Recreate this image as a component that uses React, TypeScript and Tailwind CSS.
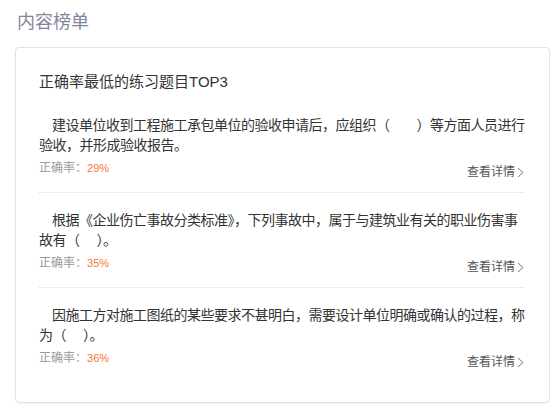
import React from 'react';

interface Question {
  lines: string[];
  rate: string;
}

const questions: Question[] = [
  {
    lines: ['建设单位收到工程施工承包单位的验收申请后，应组织（　　）等方面人员进行', '验收，并形成验收报告。'],
    rate: '29%',
  },
  {
    lines: ['根据《企业伤亡事故分类标准》，下列事故中，属于与建筑业有关的职业伤害事', '故有（　 ）。'],
    rate: '35%',
  },
  {
    lines: ['因施工方对施工图纸的某些要求不甚明白，需要设计单位明确或确认的过程，称', '为（　 ）。'],
    rate: '36%',
  },
];

const Chevron: React.FC = () => (
  <svg width="7" height="11" viewBox="0 0 7 11" className="ml-[2px] inline-block">
    <path d="M1 1 L6 5.5 L1 10" fill="none" stroke="#777" strokeWidth="1" />
  </svg>
);

const QuestionItem: React.FC<{ q: Question; last: boolean }> = ({ q, last }) => {
  return (
    <div className={`pt-[17px] ${last ? '' : 'pb-[12px] border-b border-dotted border-[#dcdcdc]'}`}>
      <div className="text-[14px] leading-[20px] text-[#333] whitespace-nowrap tracking-[-0.5px]">
        {q.lines.map((line, i) => (
          <div key={i} className={i === 0 ? 'pl-[13px]' : ''}>
            {line}
          </div>
        ))}
      </div>
      <div className="mt-[5px] flex justify-between items-start">
        <span className="text-[12px] leading-4 text-[#999]">
          正确率：<span className="text-[#f5763b] text-[11px]">{q.rate}</span>
        </span>
        <a className="mt-[4px] mr-[1px] flex items-center text-[12px] leading-4 text-[#555] cursor-pointer">
          查看详情
          <Chevron />
        </a>
      </div>
    </div>
  );
};

const App: React.FC = () => {
  return (
    <div
      className="w-[553px] h-[407px] bg-white overflow-hidden"
      style={{ fontFamily: '"Liberation Sans", "Noto Sans CJK SC", sans-serif' }}
    >
      <div className="pl-[17px] pt-[10px] text-[18px] leading-[24px] text-[#8585a0]">内容榜单</div>
      <div className="mt-[13px] ml-[15px] w-[535px] border border-[#e2e2e2] rounded-[4px] pl-[23px] pr-[24px] pt-[23px] pb-[32px] shadow-[0_1px_1px_rgba(0,0,0,0.04)]">
        <div className="text-[15px] leading-[22px] text-[#333] mb-[5px]">正确率最低的练习题目TOP3</div>
        {questions.map((q, i) => (
          <QuestionItem key={i} q={q} last={i === questions.length - 1} />
        ))}
      </div>
    </div>
  );
};

export default App;
